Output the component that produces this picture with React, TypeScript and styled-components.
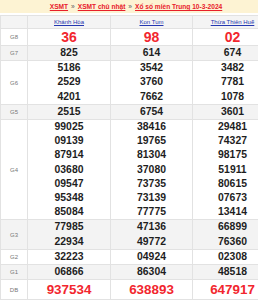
import styled, { createGlobalStyle } from 'styled-components';

type Row = {
  label: string;
  values: string[][];
  $kind?: 'big' | 'normal';
};

const provinces = ['Khánh Hòa', 'Kon Tum', 'Thừa Thiên Huế'];

const rows: Row[] = [
  { label: 'G8', values: [['36'], ['98'], ['02']], $kind: 'big' },
  { label: 'G7', values: [['825'], ['614'], ['674']] },
  {
    label: 'G6',
    values: [
      ['5186', '2529', '4201'],
      ['3542', '3760', '7662'],
      ['3482', '7781', '1078'],
    ],
  },
  { label: 'G5', values: [['2515'], ['6754'], ['3601']] },
  {
    label: 'G4',
    values: [
      ['99025', '09139', '87914', '03680', '09547', '95348', '85084'],
      ['38416', '19765', '81304', '37080', '73735', '73139', '77775'],
      ['29481', '74327', '98175', '51911', '80615', '07673', '13414'],
    ],
  },
  {
    label: 'G3',
    values: [
      ['77985', '22934'],
      ['47136', '49772'],
      ['66899', '76360'],
    ],
  },
  { label: 'G2', values: [['32223'], ['04924'], ['02308']] },
  { label: 'G1', values: [['06866'], ['86304'], ['48518']] },
  { label: 'DB', values: [['937534'], ['638893'], ['647917']], $kind: 'big' },
];

const App = () => {
  return (
    <>
      <GlobalStyle />
      <Page>
        <Breadcrumb>
          <CrumbLink>XSMT</CrumbLink>
          <Sep>»</Sep>
          <CrumbLink>XSMT chủ nhật</CrumbLink>
          <Sep>»</Sep>
          <CrumbLink>Xổ số miền Trung 10-3-2024</CrumbLink>
        </Breadcrumb>
        <ResultTable>
          <colgroup>
            <col style={{ width: 27 }} />
            <col style={{ width: 83 }} />
            <col style={{ width: 82 }} />
            <col style={{ width: 80 }} />
          </colgroup>
          <thead>
            <tr>
              <HeadCell />
              {provinces.map((p) => (
                <HeadCell key={p}>
                  <ProvinceLink>{p}</ProvinceLink>
                </HeadCell>
              ))}
            </tr>
          </thead>
          <tbody>
            {rows.map((row, i) => (
              <BodyRow key={row.label} $shaded={i % 2 === 1}>
                <LabelCell>{row.label}</LabelCell>
                {row.values.map((nums, j) => (
                  <NumberCell key={j}>
                    {nums.map((n, k) =>
                      row.$kind === 'big' ? (
                        <BigNumber key={k} $tall={row.label === 'DB'}>
                          {n}
                        </BigNumber>
                      ) : (
                        <Number key={k}>{n}</Number>
                      )
                    )}
                  </NumberCell>
                ))}
              </BodyRow>
            ))}
          </tbody>
        </ResultTable>
      </Page>
    </>
  );
};

export default App;

const GlobalStyle = createGlobalStyle`
  html, body {
    margin: 0;
    padding: 0;
    background: #fff;
    overflow: hidden;
  }
  body {
    font-family: 'Liberation Sans', Arial, sans-serif;
  }
`;

const Page = styled.div`
  width: 272px;
  display: flex;
  flex-direction: column;
  gap: 2px;
`;

const Breadcrumb = styled.div`
  height: 13px;
  background: #fdf3d3;
  display: flex;
  align-items: center;
  justify-content: center;
  gap: 3px;
  font-size: 6.6px;
  font-weight: bold;
`;

const CrumbLink = styled.span`
  color: #e8202a;
  text-decoration: underline;
`;

const Sep = styled.span`
  color: #555;
  font-weight: normal;
`;

const ResultTable = styled.table`
  width: 272px;
  table-layout: fixed;
  border-collapse: collapse;
  font-size: 6px;
  line-height: 12px;
`;

const HeadCell = styled.th`
  height: 12px;
  padding: 0;
  background: #f4f4f4;
  border: 1px solid #e2e2e2;
  font-weight: normal;
  text-align: center;
  vertical-align: middle;
`;

const ProvinceLink = styled.span`
  font-size: 6px;
  color: #2437b0;
  text-decoration: underline;
`;

const BodyRow = styled.tr<{ $shaded: boolean }>`
  background: ${(p) => (p.$shaded ? '#f3f3f3' : '#fff')};
`;

const LabelCell = styled.td`
  padding: 0;
  border: 1px solid #e2e2e2;
  text-align: center;
  vertical-align: middle;
  font-size: 6px;
  color: #777;
`;

const NumberCell = styled.td`
  padding: 0;
  border: 1px solid #e2e2e2;
  text-align: center;
  vertical-align: middle;
`;

const Number = styled.div`
  font-size: 10.4px;
  line-height: 14.2px;
  font-weight: bold;
  color: #1e1e1e;
`;

const BigNumber = styled.div<{ $tall: boolean }>`
  font-size: ${(p) => (p.$tall ? '13.4px' : '14px')};
  line-height: ${(p) => (p.$tall ? '19px' : '16px')};
  font-weight: bold;
  color: #f2262e;
`;
